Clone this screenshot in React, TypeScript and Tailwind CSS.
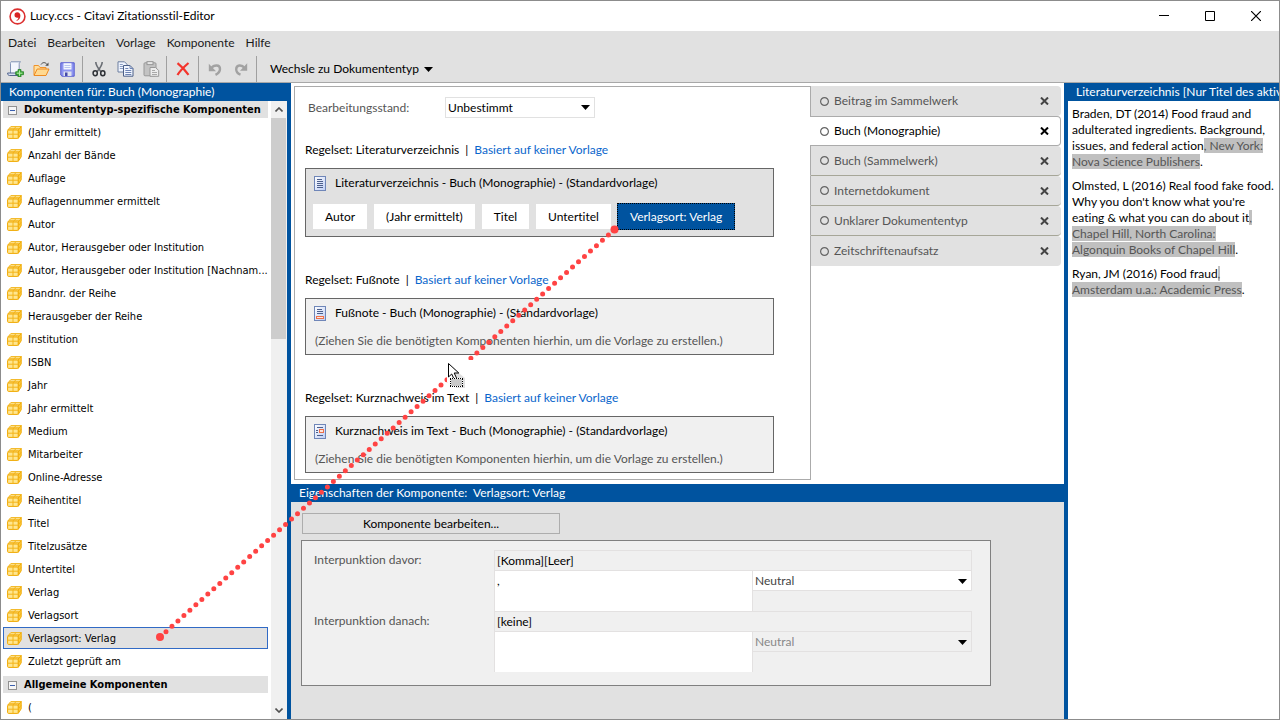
import type { ReactNode } from 'react'

const components = [
  '(Jahr ermittelt)',
  'Anzahl der Bände',
  'Auflage',
  'Auflagennummer ermittelt',
  'Autor',
  'Autor, Herausgeber oder Institution',
  'Autor, Herausgeber oder Institution [Nachnam...',
  'Bandnr. der Reihe',
  'Herausgeber der Reihe',
  'Institution',
  'ISBN',
  'Jahr',
  'Jahr ermittelt',
  'Medium',
  'Mitarbeiter',
  'Online-Adresse',
  'Reihentitel',
  'Titel',
  'Titelzusätze',
  'Untertitel',
  'Verlag',
  'Verlagsort',
  'Verlagsort: Verlag',
  'Zuletzt geprüft am',
]

const selectedComponent = 'Verlagsort: Verlag'

const chips = ['Autor', '(Jahr ermittelt)', 'Titel', 'Untertitel', 'Verlagsort: Verlag']

const docTypes = [
  'Beitrag im Sammelwerk',
  'Buch (Monographie)',
  'Buch (Sammelwerk)',
  'Internetdokument',
  'Unklarer Dokumententyp',
  'Zeitschriftenaufsatz',
]

function Caret({ className = '' }: { className?: string }) {
  return (
    <svg className={className} width="9" height="5" viewBox="0 0 9 5" aria-hidden="true">
      <path d="M0 0h9L4.500 5z" fill="#000" />
    </svg>
  )
}

function CubeIcon() {
  return (
    <svg width="15" height="13" viewBox="0 0 15 13" className="shrink-0" aria-hidden="true">
      <path d="M.8 4L3.800.6h10.400L11.200 4z" fill="#fff0b5" stroke="#f2b41c" />
      <path d="M11.200 4l3-3.400v7.200l-3 4.600z" fill="#fbc93f" stroke="#f0ab08" />
      <rect x=".6" y="4" width="10.600" height="8.400" rx="1" fill="#ffe68f" stroke="#f0a800" />
      <path d="M6 4v8.400M6 4l3-3.400M.6 8.200h10.600l3-4M2.300 2.300h10.500" stroke="#f3b41a" fill="none" />
    </svg>
  )
}

function LogoIcon() {
  return (
    <svg width="17" height="17" viewBox="0 0 17 17" aria-hidden="true">
      <circle cx="8.500" cy="8.500" r="7.400" fill="#fff" stroke="#dc2f2f" strokeWidth="1.600" />
      <path d="M8.200 4.300c2 0 3.200 1.400 3.200 3.500 0 2.400-1.400 4.300-3.600 5.100l-.3-.8c1.300-.7 1.900-1.600 1.900-2.700-.3.200-.8.300-1.200.3a2.700 2.700 0 010-5.400z" fill="#d92323" />
    </svg>
  )
}

const newIcon = (
  <svg width="17" height="16" viewBox="0 0 17 16">
    <path d="M4 .8h9.500c-1.500 1-1.300 2-1.300 3V12.500H3.500V3C3.500 2 3 1.500 4 .8z" fill="#f3f7fe" stroke="#8193b5" />
    <path d="M.6 12h8.400c.3 1.600 1.200 2.400 2 2.500H2.500C1.300 14.500.6 13.500.6 12z" fill="#d6dff2" stroke="#52658d" />
    <path d="M11 8.500h3v2.200h2.500v3H14V16h-3v-2.300H8.700v-3H11z" fill="#3fae3a" stroke="#1f7a22" strokeWidth=".7" />
    <path d="M12.500 9.500v5.300M9.800 12.200h5.600" stroke="#b4eaaa" />
  </svg>
)

const openIcon = (
  <svg width="17" height="16" viewBox="0 0 17 16">
    <path d="M1 14V4.500h4.500l1.500 2h6v2" fill="#ffe0a0" stroke="#f0932a" />
    <path d="M1 14.500l3.200-6.500h11.800l-3 6.500z" fill="#ffd991" stroke="#ee8a20" />
    <path d="M8 3.500C9.500 1 12.500 1 14 3.500" fill="none" stroke="#4d4d4d" />
    <path d="M15.500 1.500v3.300h-3.300z" fill="#4d4d4d" />
  </svg>
)

const saveIcon = (
  <svg width="15" height="15" viewBox="0 0 15 15">
    <path d="M.8.800h13.400v13.400H2L.8 13z" fill="#8d94f0" stroke="#555bd0" />
    <rect x="3.500" y="1.200" width="8" height="6.300" fill="#f3f6ff" />
    <path d="M4.500 3.500h6M4.500 5.500h6" stroke="#b9c5ee" />
    <rect x="3.500" y="9.500" width="8" height="4.500" fill="#dfe3ee" />
    <rect x="5" y="10.500" width="2.500" height="3.500" fill="#4349a8" />
  </svg>
)

const cutIcon = (
  <svg width="16" height="16" viewBox="0 0 16 16" fill="none">
    <path d="M4.800 1c0 3 2 6 5 9.500M11.200 1c0 3-2 6-5 9.500" stroke="#6a6e74" strokeWidth="1.600" />
    <ellipse cx="4.200" cy="12.300" rx="2.100" ry="2.500" stroke="#2d3035" strokeWidth="1.500" />
    <ellipse cx="11.800" cy="12.300" rx="2.100" ry="2.500" stroke="#2d3035" strokeWidth="1.500" />
  </svg>
)

const copyIcon = (
  <svg width="17" height="16" viewBox="0 0 17 16">
    <path d="M1 .8h6.500l2.500 2.500V11H1z" fill="#f0f5ff" stroke="#6c7e9f" />
    <path d="M2.800 3.500h3M2.800 5.500h5M2.800 7.500h4" stroke="#8a9ec4" />
    <path d="M6.500 4.500H13l3 3v7.700H6.500z" fill="#f0f5ff" stroke="#4b5f87" />
    <path d="M13 4.500v3h3M8.300 7.500h3M8.300 9.500h6M8.300 11.500h6M8.300 13.500h6" stroke="#6e84b3" fill="none" />
  </svg>
)

const pasteIcon = (
  <svg width="17" height="16" viewBox="0 0 17 16">
    <rect x="1" y="1.800" width="12" height="13" rx="1" fill="#c3c3c3" stroke="#989898" />
    <rect x="4" y=".6" width="6" height="3" fill="#e6e6e6" stroke="#989898" />
    <path d="M7 6.500h5.500l3.200 3v5.800H7z" fill="#ececec" stroke="#989898" />
    <path d="M9 9.500h3M9 11.500h5M9 13.500h5" stroke="#a8a8a8" />
  </svg>
)

const deleteIcon = (
  <svg width="14" height="14" viewBox="0 0 14 14">
    <path d="M1.500 1.200C5 4 9 8 12.500 12.800M12.500 1C9 4 4.500 8 1.500 13" stroke="#f3342c" strokeWidth="2.200" fill="none" />
  </svg>
)

const undoIcon = (
  <svg width="14" height="14" viewBox="0 0 14 14">
    <path d="M3 6.500C6 2.500 12 2.500 12 7c0 2.500-1.800 4.500-4.500 5.800" fill="none" stroke="#a2a2a2" strokeWidth="2.400" />
    <path d="M.8 1.800v7.400h7.200z" fill="#a2a2a2" />
  </svg>
)

const redoIcon = (
  <svg width="14" height="14" viewBox="0 0 14 14">
    <path d="M10.500 6C8 2.500 2.200 2.500 2.200 7.300c0 2.400 1.600 4.400 4.300 5.400" fill="none" stroke="#a2a2a2" strokeWidth="2.400" />
    <path d="M13.200 1.300v7.400H6z" fill="#a2a2a2" />
  </svg>
)

function ToolButton({ label, disabled, children }: { label: string; disabled?: boolean; children: ReactNode }) {
  return (
    <button aria-label={label} disabled={disabled} className="w-[26px] h-6 flex items-center justify-center">
      {children}
    </button>
  )
}

function Separator() {
  return <div className="w-px h-[26px] ml-[2px] mr-[3px] bg-[#a0a0a0]" />
}

function TitleBar() {
  return (
    <header className="h-[30px] shrink-0 bg-white flex items-center pl-2 text-black">
      <LogoIcon />
      <h1 className="ml-1 flex-1">Lucy.ccs - Citavi Zitationsstil-Editor</h1>
      <button aria-label="Minimieren" className="w-[46px] h-full flex items-center justify-center">
        <svg width="10" height="10" viewBox="0 0 10 10"><path d="M0 4.500h10" stroke="#000" /></svg>
      </button>
      <button aria-label="Maximieren" className="w-[46px] h-full flex items-center justify-center">
        <svg width="10" height="10" viewBox="0 0 10 10"><path d="M.5.5h9v9h-9z" stroke="#000" fill="none" /></svg>
      </button>
      <button aria-label="Schließen" className="w-[46px] h-full flex items-center justify-center">
        <svg width="10" height="10" viewBox="0 0 10 10"><path d="M0 0l10 10M10 0L0 10" stroke="#000" strokeWidth="1.200" /></svg>
      </button>
    </header>
  )
}

function Toolbar() {
  return (
    <div className="shrink-0 bg-[#e1e1e1] border-b border-[#a8a8a8]">
      <nav className="h-6 mb-px flex items-center gap-[11px] pl-[7px] text-[#1a1a1a]">
        <button>Datei</button>
        <button>Bearbeiten</button>
        <button>Vorlage</button>
        <button>Komponente</button>
        <button>Hilfe</button>
      </nav>
      <div className="h-[26px] flex items-center pl-px">
        <ToolButton label="Neu">{newIcon}</ToolButton>
        <ToolButton label="Öffnen">{openIcon}</ToolButton>
        <ToolButton label="Speichern">{saveIcon}</ToolButton>
        <Separator />
        <ToolButton label="Ausschneiden">{cutIcon}</ToolButton>
        <ToolButton label="Kopieren">{copyIcon}</ToolButton>
        <ToolButton label="Einfügen" disabled>{pasteIcon}</ToolButton>
        <Separator />
        <ToolButton label="Löschen">{deleteIcon}</ToolButton>
        <Separator />
        <ToolButton label="Rückgängig" disabled>{undoIcon}</ToolButton>
        <ToolButton label="Wiederholen" disabled>{redoIcon}</ToolButton>
        <Separator />
        <button className="ml-[10px] flex items-center gap-[5px]">
          Wechsle zu Dokumententyp
          <Caret />
        </button>
      </div>
    </div>
  )
}

function PaneTitle({ children }: { children: ReactNode }) {
  return (
    <h2 className="h-[18px] shrink-0 pl-2 bg-[#00539f] text-white leading-[18px] whitespace-pre overflow-hidden">
      {children}
    </h2>
  )
}

function SectionHeader({ children }: { children: ReactNode }) {
  return (
    <h3 className="h-[17px] flex items-center gap-[7px] pt-px pl-[5px] bg-[#e1e1e1] font-bold text-black whitespace-nowrap">
      <svg width="9" height="9" viewBox="0 0 9 9" className="shrink-0" aria-hidden="true">
        <rect x=".5" y=".5" width="8" height="8" fill="#f6f6f6" stroke="#919191" />
        <path d="M2 4.500h5" stroke="#3a5fae" />
      </svg>
      {children}
    </h3>
  )
}

function ComponentItem({ name }: { name: string }) {
  const selected = name === selectedComponent
  return (
    <li>
      <button
        className={
          'w-full h-[22px] flex items-center gap-[6px] pt-px pl-[3px] border text-left whitespace-nowrap ' +
          (selected ? 'bg-[#e1e1e1] border-[#316ac5]' : 'border-transparent')
        }
      >
        <CubeIcon />
        {name}
      </button>
    </li>
  )
}

function Sidebar() {
  return (
    <aside className="w-[286px] shrink-0 flex flex-col bg-white">
      <PaneTitle>Komponenten für: Buch (Monographie)</PaneTitle>
      <div className="flex-1 min-h-0 flex">
        <div className="flex-1 min-w-0 pl-[2px] pr-[3px] overflow-hidden font-['DejaVu_Sans_Condensed','DejaVu_Sans',sans-serif] text-[11px]">
          <SectionHeader>Dokumententyp-spezifische Komponenten</SectionHeader>
          <ul className="mt-[3px] mb-1 flex flex-col gap-px">
            {components.map((name) => (
              <ComponentItem key={name} name={name} />
            ))}
          </ul>
          <SectionHeader>Allgemeine Komponenten</SectionHeader>
          <ul className="mt-[3px]">
            <ComponentItem name="(" />
          </ul>
        </div>
        {/* Bildlaufleiste */}
        <div className="w-4 shrink-0 flex flex-col bg-[#f0f0f0]">
          <div className="h-[17px] flex items-center justify-center">
            <svg width="8" height="5" viewBox="0 0 8 5"><path d="M.5 4.500L4 1l3.500 3.500" stroke="#505050" strokeWidth="1.600" fill="none" /></svg>
          </div>
          <div className="h-[221px] mr-px bg-[#cdcdcd]" />
          <div className="mt-auto h-[17px] flex items-center justify-center">
            <svg width="8" height="5" viewBox="0 0 8 5"><path d="M.5.5L4 4 7.500.5" stroke="#505050" strokeWidth="1.600" fill="none" /></svg>
          </div>
        </div>
      </div>
    </aside>
  )
}

type RuleKind = 'bibliography' | 'footnote' | 'inline'

function RuleIcon({ kind }: { kind: RuleKind }) {
  return (
    <svg width="12" height="15" viewBox="0 0 12 15" className="shrink-0" aria-hidden="true">
      <defs>
        <linearGradient id={kind} x1="0" y1="0" x2="1" y2="1">
          <stop offset="0" stopColor="#fff" />
          <stop offset="1" stopColor="#bccdf5" />
        </linearGradient>
      </defs>
      <rect x=".5" y=".5" width="11" height="14" fill={`url(#${kind})`} stroke="#6f86b8" />
      {kind === 'bibliography' && <path d="M3 3.500h5M3 5.500h6M3 7.500h6M3 9.500h6M3 11.500h6" stroke="#4c5f8c" />}
      {kind === 'footnote' && (
        <>
          <path d="M3 3.500h5M3 5.500h6M3 7.500h6" stroke="#4c5f8c" />
          <rect x="2.500" y="10.500" width="7" height="2" fill="#ffe6dc" stroke="#ee7048" />
        </>
      )}
      {kind === 'inline' && (
        <>
          <path d="M3 3.500h6M2 6.500h2M2 8.500h2M3 11.500h6" stroke="#4c5f8c" />
          <rect x="5.500" y="5.500" width="4" height="3" fill="#ffe6dc" stroke="#ee7048" />
        </>
      )}
    </svg>
  )
}

function RuleSet({ name, kind, children }: { name: string; kind: RuleKind; children: ReactNode }) {
  return (
    <section>
      <div className="h-[18px] mb-[9px] flex items-center text-black">
        <h3>Regelset: {name}</h3>
        <span className="mx-[6px]">|</span>
        <a href="#vorlage" className="text-[#0a66cc]">Basiert auf keiner Vorlage</a>
      </div>
      <div className={'border border-[#666] px-[6px] ' + (kind === 'bibliography' ? 'bg-[#e1e1e1]' : 'bg-[#f0f0f0]')}>
        <div className="h-7 flex items-center gap-[9px] pl-[2px] text-black">
          <RuleIcon kind={kind} />
          <span>{name} - Buch (Monographie) - (Standardvorlage)</span>
        </div>
        {children}
      </div>
    </section>
  )
}

function DropHint() {
  return (
    <p className="h-[27px] pl-[3px] leading-[27px] text-[#555]">
      (Ziehen Sie die benötigten Komponenten hierhin, um die Vorlage zu erstellen.)
    </p>
  )
}

function Editor() {
  return (
    <div className="flex-1 min-w-0 flex flex-col gap-[34px] pl-[10px] pr-9 pb-[6px] border-l border-y border-[#ababab]">
      <div className="-mb-[11px] mt-[10px] h-[21px] flex items-center text-[#555]">
        <label htmlFor="status" className="w-[140px] pl-[3px]">Bearbeitungsstand:</label>
        <div className="relative w-[150px]">
          <select id="status" className="block appearance-none w-full h-[21px] pl-[2px] bg-white border border-[#e1e1e1] text-black">
            <option>Unbestimmt</option>
          </select>
          <Caret className="absolute right-[5px] top-2 pointer-events-none" />
        </div>
      </div>
      <RuleSet name="Literaturverzeichnis" kind="bibliography">
        <div className="mt-[6px] mb-[6px] flex gap-[5px]">
          {chips.map((chip) => (
            <button
              key={chip}
              className={
                'h-[27px] px-3 border whitespace-nowrap ' +
                (chip === selectedComponent
                  ? 'bg-[#00539f] border-dotted border-black text-white'
                  : 'bg-white border-[#e1e1e1] text-black')
              }
            >
              {chip}
            </button>
          ))}
        </div>
      </RuleSet>
      <RuleSet name="Fußnote" kind="footnote">
        <DropHint />
      </RuleSet>
      <RuleSet name="Kurznachweis im Text" kind="inline">
        <DropHint />
      </RuleSet>
    </div>
  )
}

function DocTypeTabs() {
  return (
    <div className="w-[251px] shrink-0 flex flex-col">
      {docTypes.map((type, i) => {
        const active = i === 1
        return (
          <div
            key={type}
            className={
              'h-[30px] flex items-center rounded-r ' +
              (active
                ? 'bg-white border-r border-y border-[#ababab] text-black pl-[10px] pr-[11px]'
                : 'bg-[#e1e1e1] border-l border-l-[#ababab] text-[#555] pl-[9px] pr-3 ' +
                  (i > 1 && i < docTypes.length - 1 ? 'border-b border-b-[#a6a698]' : ''))
            }
          >
            <button className="flex-1 flex items-center gap-[5px] text-left">
              <svg width="9" height="9" viewBox="0 0 9 9" aria-hidden="true">
                <circle cx="4.500" cy="4.500" r="3.900" fill="none" stroke="#666" strokeWidth="1.200" />
              </svg>
              {type}
            </button>
            <button aria-label={`${type} schließen`}>
              <svg width="9" height="8" viewBox="0 0 9 8">
                <path d="M1 .5l7 7M8 .5l-7 7" stroke={active ? '#000' : '#444'} strokeWidth="2" />
              </svg>
            </button>
          </div>
        )
      })}
      <div className="flex-1 border-l border-[#ababab]" />
    </div>
  )
}

interface PunctuationProps {
  id: string
  label: string
  summary: string
  value: string
  disabled?: boolean
}

function Punctuation({ id, label, summary, value, disabled }: PunctuationProps) {
  return (
    <div className="flex">
      <label htmlFor={id} className="w-[180px] h-5 shrink-0 leading-5 text-[#555]">{label}</label>
      <div className="flex-1 min-w-0">
        <div className="h-[21px] pl-[2px] border border-[#e3e1e1] leading-5 text-black">{summary}</div>
        <div className="flex items-start">
          <textarea
            id={id}
            defaultValue={value}
            className="block w-[259px] h-10 pl-[2px] resize-none bg-white border-x border-[#e3e1e1] leading-5 text-black"
          />
          <div className="relative flex-1">
            <select
              aria-label={`${label} Schriftschnitt`}
              disabled={disabled}
              className={
                'block appearance-none w-full h-5 pl-[2px] border-r border-b border-[#e3e1e1] opacity-100 ' +
                (disabled ? 'bg-[#f0f0f0] text-[#888]' : 'bg-white text-[#444]')
              }
            >
              <option>Neutral</option>
            </select>
            <Caret className="absolute right-[5px] top-2 pointer-events-none" />
          </div>
        </div>
      </div>
    </div>
  )
}

function Properties() {
  return (
    <section className="flex-1 flex flex-col bg-[#e1e1e1]">
      <PaneTitle>Eigenschaften der Komponente:  Verlagsort: Verlag</PaneTitle>
      <div className="pt-[11px] pl-[10px] pr-[73px]">
        <button className="ml-px w-[258px] h-[21px] border border-[#adadad] text-black">Komponente bearbeiten...</button>
        <div className="mt-[6px] pt-[9px] pb-[13px] pl-3 pr-[18px] bg-[#f0f0f0] border border-[#808080]">
          <Punctuation id="before" label="Interpunktion davor:" summary="[Komma][Leer]" value=", " />
          <Punctuation id="after" label="Interpunktion danach:" summary="[keine]" value="" disabled />
        </div>
      </div>
    </section>
  )
}

function Mark({ children }: { children: ReactNode }) {
  return <mark className="bg-[#c0c0c0] text-[#555]">{children}</mark>
}

function Preview() {
  return (
    <aside className="w-[211px] shrink-0 flex flex-col bg-white overflow-hidden">
      <PaneTitle>Literaturverzeichnis [Nur Titel des aktiv</PaneTitle>
      <div className="pt-[5px] pl-1 flex flex-col gap-2 leading-4 text-black whitespace-nowrap">
        <p>
          Braden, DT (2014) Food fraud and
          <br />
          adulterated ingredients. Background,
          <br />
          issues, and federal action<Mark>, New York:</Mark>
          <br />
          <Mark>Nova Science Publishers</Mark>.
        </p>
        <p>
          Olmsted, L (2016) Real food fake food.
          <br />
          Why you don't know what you're
          <br />
          eating &amp; what you can do about it<Mark>,</Mark>
          <br />
          <Mark>Chapel Hill, North Carolina:</Mark>
          <br />
          <Mark>Algonquin Books of Chapel Hill</Mark>.
        </p>
        <p>
          Ryan, JM (2016) Food fraud<Mark>,</Mark>
          <br />
          <Mark>Amsterdam u.a.: Academic Press</Mark>.
        </p>
      </div>
    </aside>
  )
}

// Gepunktete Ziehspur von der Liste bis zum Baustein, mit Mauszeiger
function DragTrail() {
  return (
    <svg className="pointer-events-none" width="800" height="700" viewBox="0 0 800 700" aria-hidden="true">
      <path d="M160 637L614.500 229.500" stroke="#ff4343" strokeWidth="5" strokeLinecap="round" strokeDasharray="0 8.030" />
      <rect x="447" y="360" width="34" height="22" fill="#fff" />
      <circle cx="160" cy="637" r="4" fill="#ff4343" />
      <circle cx="614.500" cy="229.500" r="4" fill="#ff4343" />
      <path d="M453 367v16l3 5h9v-10l-5-4z" fill="#000" opacity=".12" />
      <path d="M448.500 363.500v13.500l3.200-3 3 6.500 2.400-1.200-2.900-6.300h4.600z" fill="#fff" stroke="#000" />
      <rect x="450" y="378" width="13" height="9" fill="#fff" />
      <rect x="451" y="379" width="11" height="7" fill="#c9c9c9" />
      <path d="M450 378.500h13M450 386.500h13M450.500 379v8M462.500 379v8" stroke="#000" strokeDasharray="1 1" fill="none" />
    </svg>
  )
}

export default function App() {
  return (
    <div className="relative h-screen flex flex-col overflow-hidden border border-[#8c8c8c] bg-white font-['Lato','Open_Sans',sans-serif] [font-variant-ligatures:none] text-[12px] leading-[18px] text-black">
      <TitleBar />
      <Toolbar />
      <div className="flex-1 min-h-0 flex">
        <Sidebar />
        <main className="flex-1 min-w-0 flex flex-col border-x-4 border-[#00539f]">
          <div className="flex p-[3px] pb-1 bg-white">
            <Editor />
            <DocTypeTabs />
          </div>
          <Properties />
        </main>
        <Preview />
      </div>
      <div className="absolute -left-px -top-px pointer-events-none">
        <DragTrail />
      </div>
    </div>
  )
}
